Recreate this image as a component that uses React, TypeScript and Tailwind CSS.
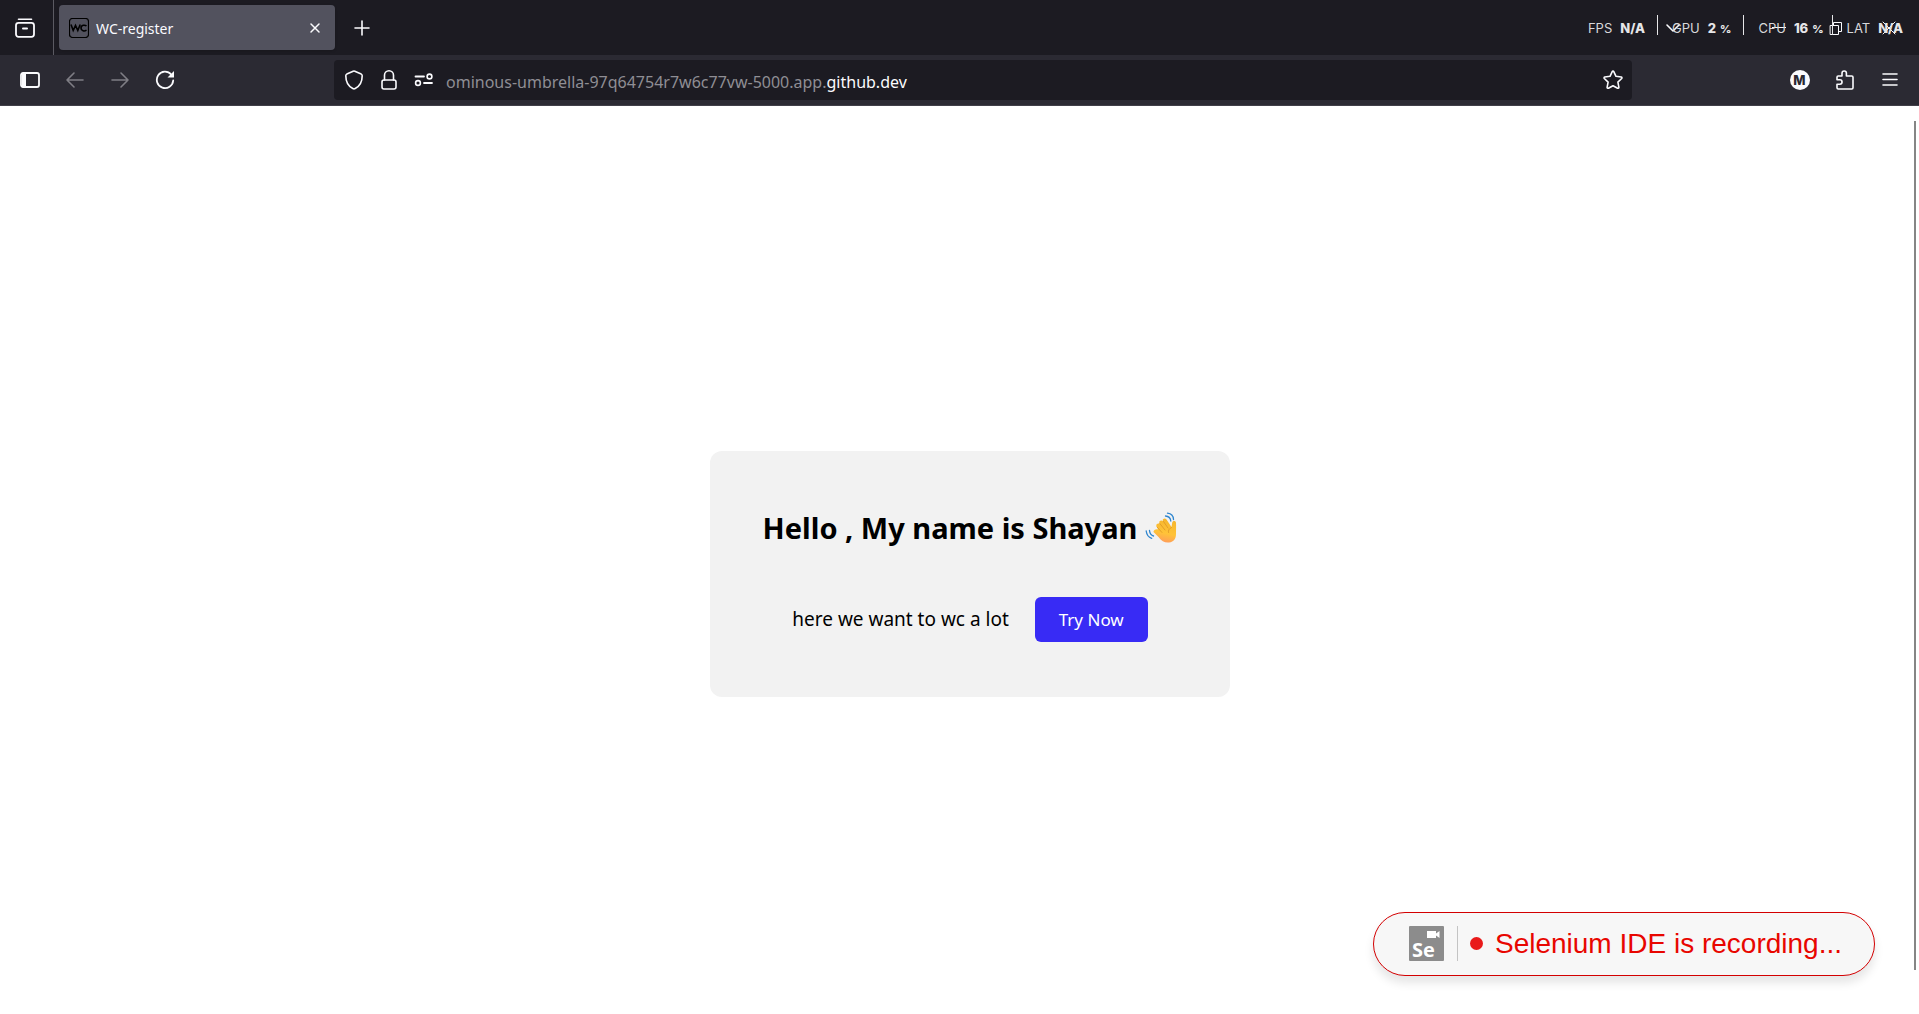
import type { ReactNode } from "react";

const ui = "font-['Noto_Sans',sans-serif]";

function Icon({ size = 20, children, className = "" }: { size?: number; children: ReactNode; className?: string }) {
  return (
    <svg
      width={size}
      height={size}
      viewBox={`0 0 ${size} ${size}`}
      fill="none"
      stroke="currentColor"
      strokeWidth="1.6"
      strokeLinecap="round"
      strokeLinejoin="round"
      className={className}
      aria-hidden="true"
    >
      {children}
    </svg>
  );
}

function IconButton({ label, className, children }: { label: string; className: string; children: ReactNode }) {
  return (
    <button type="button" aria-label={label} className={`flex shrink-0 items-center justify-center ${className}`}>
      {children}
    </button>
  );
}

function Stat({ name, value, unit }: { name: string; value: string; unit?: string }) {
  return (
    <div className="flex items-baseline gap-2">
      <span className="text-[13px] text-[#d8d8da]">{name}</span>
      <span className="flex items-baseline gap-1 text-[13px] font-extrabold text-[#e6e6e8]">
        {value}
        {unit && <span className="text-[11px]">{unit}</span>}
      </span>
    </div>
  );
}

function Divider() {
  return <span className="h-5 w-px self-start bg-[#e6e6e8]" />;
}

function StatsOverlay() {
  return (
    <div className="pointer-events-none absolute top-[15px] right-4 flex h-5 font-['Inter',sans-serif] leading-[26px]">
      <Stat name="FPS" value="N/A" />
      <span className="w-3" />
      <Divider />
      <span className="w-[14px]" />
      <Stat name="GPU" value="2" unit="%" />
      <span className="w-3" />
      <Divider />
      <span className="w-[14px]" />
      <Stat name="CPU" value="16" unit="%" />
      <span className="w-2" />
      <Divider />
      <span className="w-[14px]" />
      <Stat name="LAT" value="N/A" />
    </div>
  );
}

function TabBar() {
  return (
    <div className="relative flex h-[55px] bg-[#1c1b22]">
      <IconButton label="Recent browsing" className="w-[53px] pr-1">
        <Icon>
          <path d="M3.5 1.2h13" />
          <rect x="1" y="4.8" width="18" height="14" rx="2.5" strokeWidth="1.8" />
          <path d="M8 10.5h4" strokeWidth="2" />
        </Icon>
      </IconButton>
      <span className="w-px bg-[#5b5a62]" />
      <div className="my-[5px] ml-[5px] flex w-[276px] items-center rounded bg-[#52525e] px-[10px] shadow">
        <svg width="20" height="20" viewBox="0 0 20 20" aria-hidden="true">
          <rect x="0.5" y="0.5" width="19" height="19" rx="3" fill="none" stroke="#000" strokeWidth="1.2" />
          <path
            d="M2 6.500l2.200 6 2.300-5 2.300 5 2.400-6M17.500 8c-1.500-1.300-5.500-1.200-5.500 2s3.500 3.500 5.500 2.200"
            fill="none"
            stroke="#000"
            strokeWidth="1.600"
          />
        </svg>
        <span className="ml-[7px] flex-1 pt-0.5 text-[14px]">WC-register</span>
        <IconButton label="Close tab" className="size-5">
          <Icon size={12}>
            <path d="M2 2l8 8M10 2l-8 8" strokeWidth="1.500" />
          </Icon>
        </IconButton>
      </div>
      <IconButton label="New tab" className="w-[53px]">
        <Icon size={16}>
          <path d="M8 1v14M1 8h14" />
        </Icon>
      </IconButton>
      <div className="ml-auto flex pr-[5px]">
        <IconButton label="List all tabs" className="mr-[49px] w-[57px]">
          <Icon size={16}>
            <path d="M2 5l6 6 6-6" />
          </Icon>
        </IconButton>
        <IconButton label="Minimize" className="w-[57px]">
          <Icon size={14}>
            <path d="M0 6.500h14" strokeWidth="1" strokeLinecap="butt" />
          </Icon>
        </IconButton>
        <IconButton label="Restore" className="w-[57px]">
          <Icon size={14}>
            <path d="M1.500 4.500h8v9h-8zM4.500 4V1.500h8v9H10" strokeWidth="1" strokeLinejoin="miter" />
          </Icon>
        </IconButton>
        <IconButton label="Close" className="w-[50px]">
          <Icon size={14}>
            <path d="M1 1l12 12M13 1L1 13" strokeWidth="1" />
          </Icon>
        </IconButton>
      </div>
      <StatsOverlay />
    </div>
  );
}

function Toolbar() {
  return (
    <div className="flex h-[51px] items-center border-b border-[#403f48] bg-[#2b2a33]">
      <IconButton label="Sidebar" className="ml-[7px] w-[45px]">
        <Icon>
          <rect x="1" y="3" width="18" height="14" rx="2" strokeWidth="1.8" />
          <path d="M2 4h4v12H2z" fill="currentColor" stroke="none" />
        </Icon>
      </IconButton>
      <IconButton label="Back" className="w-[45px] text-[#7f7e85]">
        <Icon>
          <path d="M18 10H2M9 3l-7 7 7 7" />
        </Icon>
      </IconButton>
      <IconButton label="Forward" className="w-[45px] text-[#7f7e85]">
        <Icon>
          <path d="M2 10h16M11 3l7 7-7 7" />
        </Icon>
      </IconButton>
      <IconButton label="Reload" className="w-[45px]">
        <Icon>
          <path d="M16.200 4.500A8.200 8.200 0 1 0 18.200 10.500" strokeWidth="1.800" />
          <path d="M19 1v6.500h-6.500z" fill="currentColor" stroke="none" />
        </Icon>
      </IconButton>
      <div className="ml-[147px] flex h-10 w-[1298px] min-w-0 shrink items-center rounded bg-[#1c1b22] px-[2px]">
        <IconButton label="Tracking protection" className="w-[35px]">
          <Icon>
            <path d="M9.200 1.200a2 2 0 0 1 1.600 0l6.400 2.900c.6.300 1 .9 1 1.600 0 5.500-2.600 10.500-7 12.800a2.500 2.500 0 0 1-2.400 0c-4.400-2.300-7-7.300-7-12.800 0-.7.400-1.300 1-1.600z" />
          </Icon>
        </IconButton>
        <IconButton label="Site security" className="w-[35px]">
          <Icon>
            <rect x="3" y="10" width="14" height="9" rx="2" />
            <path d="M5.500 10V5.300a4.500 4.500 0 0 1 9 0V10" />
          </Icon>
        </IconButton>
        <IconButton label="Permissions" className="w-[35px]">
          <Icon>
            <path d="M1.500 6.500h8.500M10 13h8" strokeWidth="1.800" />
            <circle cx="15.500" cy="6.500" r="2.400" />
            <circle cx="4" cy="13" r="2.400" />
          </Icon>
        </IconButton>
        <a href="#" className="ml-[5px] flex-1 pt-[3px] text-[16px] whitespace-nowrap text-[#8f8e94]">
          ominous-umbrella-97q64754r7w6c77vw-5000.app.<span className="text-[#fbfbfe]">github.dev</span>
        </a>
        <IconButton label="Bookmark" className="w-[35px]">
          <Icon>
            <path d="M9.200 1.600a.9.900 0 0 1 1.600 0l2.200 4.700 5.200.7a.9.900 0 0 1 .5 1.500l-3.800 3.600 1 5.200a.9.900 0 0 1-1.300.9L10 15.700l-4.600 2.500a.9.900 0 0 1-1.300-.9l1-5.200-3.800-3.600A.9.900 0 0 1 1.800 7L7 6.300z" />
          </Icon>
        </IconButton>
      </div>
      <div className="ml-auto flex items-center pr-[7px]">
        <IconButton label="Account" className="w-[45px]">
          <span className="flex size-5 items-center justify-center rounded-full bg-[#fbfbfe] font-['Inter',sans-serif] text-[13px] leading-5 font-extrabold text-[#2b2a33]">
            M
          </span>
        </IconButton>
        <IconButton label="Extensions" className="w-[45px]">
          <Icon>
            <path d="M2 8.500V7.200C2 6.500 2.500 6 3.200 6H7V3.200a2.200 2.200 0 0 1 4.400 0V6h5.400c.7 0 1.200.5 1.200 1.200v10.600c0 .7-.5 1.200-1.200 1.200H3.200C2.500 19 2 18.500 2 17.800V14.200h2.800a2.200 2.200 0 0 0 0-4.500H2z" />
          </Icon>
        </IconButton>
        <IconButton label="Menu" className="w-[45px]">
          <Icon size={16}>
            <path d="M1 2h14M1 7.500h14M1 13h14" />
          </Icon>
        </IconButton>
      </div>
    </div>
  );
}

function WavingHand() {
  return (
    <svg width="32" height="32" viewBox="0 0 32 32" aria-label="waving hand" role="img">
      <defs>
        <linearGradient id="skin" x1="0.6" y1="0" x2="0.4" y2="1">
          <stop offset="0" stopColor="#f5b52c" />
          <stop offset="0.6" stopColor="#ffc338" />
          <stop offset="1" stopColor="#ff9b5c" />
        </linearGradient>
      </defs>
      <path
        d="M8.500 20L13.500 25c3 4 6.500 6 10.500 5.500 5-.5 7-4 7-8.500 0-4 .2-8 0-11 0-2.500-3.600-2.600-3.800-.2l-.7 4.200-5-7.500c-1.500-2-4.600-.5-3.600 1.700-1.600-1.700-4.600 0-3.400 2.200l.3.600c-1.700-1.300-4.300.4-3.300 2.300l1.700 3.200c-2-.9-5 .5-4.700 2.500z"
        fill="url(#skin)"
      />
      <path
        d="M12 15l5 5.500M14.800 11.500l5.200 6.500M18.500 9.500l4.500 6.500M26.500 15.500c-2.500 1-3.500 3-3 5"
        fill="none"
        stroke="#e09a28"
        strokeWidth="0.9"
        strokeLinecap="round"
      />
      <path
        d="M20.500 4c3 .2 5 2.500 5.300 5M22.500 1.200c3.500.3 5.800 3 6 6.300M4.500 18.500c.3 3 1.500 4.800 4 5.500M1.200 19c.5 4 2.300 6.300 5.500 7.300"
        fill="none"
        stroke="#2f86cf"
        strokeWidth="1.300"
        strokeLinecap="round"
      />
    </svg>
  );
}

function RecordingBadge() {
  return (
    <div
      role="status"
      className="absolute right-[44px] bottom-[38px] flex h-16 items-center rounded-full border border-[#d30001] bg-[#f7f7f7] pr-8 pb-px pl-[35px] font-['Liberation_Sans',sans-serif] shadow-[0_7px_10px_0_rgba(0,0,0,0.1)]"
    >
      <div className="relative flex size-[35px] items-end rounded-[1px] bg-[#8c8c8c] pl-[3px]">
        <span className="font-['Open_Sans',sans-serif] text-[20px] leading-[22px] font-bold text-white">Se</span>
        <svg className="absolute top-[4px] right-[4px]" width="13" height="9" viewBox="0 0 13 9" fill="#fff" aria-hidden="true">
          <path d="M0 1h9v2.500L12.500 1v7L9 5.500V8H0z" />
        </svg>
      </div>
      <span className="ml-[13px] h-[35px] w-px bg-[#c4c4c4]" />
      <span className="ml-3 size-[13px] rounded-full bg-[#e91a1a]" />
      <span className="ml-3 text-[28px] leading-8 text-[#e80600]">Selenium IDE is recording...</span>
    </div>
  );
}

export default function App() {
  return (
    <div className={`relative flex min-h-screen flex-col bg-white text-[#fbfbfe] ${ui}`}>
      <header>
        <TabBar />
        <Toolbar />
      </header>
      <main className="flex flex-1 items-center justify-center pt-7 pl-[21px] text-black">
        <section className="flex w-[520px] max-w-full flex-col items-center rounded-xl bg-[#f2f2f2] py-[55px]">
          <h1 className="flex items-center gap-2 text-[29px] leading-[44px] font-bold">
            Hello , My name is Shayan
            <WavingHand />
          </h1>
          <div className="mt-[47px] flex items-center gap-[26px]">
            <p className="text-[19px]">here we want to wc a lot</p>
            <button type="button" className="h-[45px] rounded-md bg-[#382bf5] px-6 text-[17px] text-white">
              Try Now
            </button>
          </div>
        </section>
      </main>
      <div className="absolute top-[121px] right-[3px] bottom-[44px] w-[2px] bg-[#858585]" />
      <RecordingBadge />
    </div>
  );
}
